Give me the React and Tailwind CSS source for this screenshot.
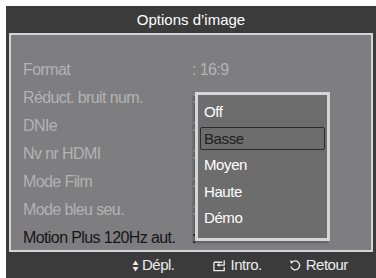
import React from "react";

const ROWS = [
  { label: "Format", value: ": 16:9" },
  { label: "Réduct. bruit num.", value: ":" },
  { label: "DNIe", value: ":" },
  { label: "Nv nr HDMI", value: ":" },
  { label: "Mode Film", value: ":" },
  { label: "Mode bleu seu.", value: ":" },
  { label: "Motion Plus 120Hz aut.", value: ":", active: true },
];

const OPTIONS = ["Off", "Basse", "Moyen", "Haute", "Démo"];

function MoveIcon() {
  return (
    <svg width="7" height="12" viewBox="0 0 7 12" className="mr-[3px]">
      <path d="M3.5 0.5 L6.5 5 L0.5 5 Z" fill="#e8e8e8" />
      <path d="M3.5 11.5 L6.5 7 L0.5 7 Z" fill="#e8e8e8" />
    </svg>
  );
}

function EnterIcon() {
  return (
    <svg width="14" height="13" viewBox="0 0 15 13" className="mr-[4px]">
      <path d="M1 3 H10 M1 3 V12 H12 V8" stroke="#e8e8e8" strokeWidth="1.4" fill="none" />
      <path d="M12 1 V6 H5" stroke="#e8e8e8" strokeWidth="1.4" fill="none" />
      <path d="M4 6 L7 3.8 L7 8.2 Z" fill="#e8e8e8" />
    </svg>
  );
}

function ReturnIcon() {
  return (
    <svg width="12" height="13" viewBox="0 0 13 13" className="mr-[5px]">
      <path d="M3.2 3 A4.8 4.8 0 1 1 2 7.5" stroke="#e8e8e8" strokeWidth="1.4" fill="none" />
      <path d="M1 1.2 L5 1.8 L2.4 4.8 Z" fill="#e8e8e8" />
    </svg>
  );
}

export default function App() {
  return (
    <div className="w-[376px] h-[278px] bg-white pl-[6px] pt-[6px]" style={{ fontFamily: '"Liberation Sans", Arial, sans-serif' }}>
      <div className="w-[370px] h-[272px] bg-[#3b3b3b] flex flex-col px-[3px]">
        <div className="h-[27px] flex items-center justify-center text-[15px] text-white pt-[1px]">
          Options d’image
        </div>
        <div className="relative h-[219px] border-2 border-[#d4d4d4] bg-[#7e7e80] pt-[21px]">
          {ROWS.map((r) => (
            <div key={r.label} className="h-[28px] flex items-center text-[16px] tracking-[-0.6px]">
              <span className={`w-[181px] pl-[12px] ${r.active ? "text-[#161616]" : "text-[#b3b3b3]"}`}>{r.label}</span>
              <span className={r.active ? "text-[#161616]" : "text-[#b3b3b3]"}>{r.value}</span>
            </div>
          ))}

          <div className="absolute left-[184px] top-[57px] w-[135px] h-[149px] border-[3px] border-[#d6d6d6] bg-[#6d6d6d] pt-[4px] px-[2px] shadow-[-2px_2px_2px_rgba(0,0,0,0.25)]">
            {OPTIONS.map((o) => (
              <div key={o} className="h-[26.5px] flex items-center text-[15px] tracking-[-0.4px]">
                {o === "Basse" ? (
                  <div className="w-full h-[23px] flex items-center border-[1.5px] border-[#2a2a2a] rounded-[2px] pl-[3px] text-[#1e1e1e]">
                    {o}
                  </div>
                ) : (
                  <span className="pl-[4px] text-white">{o}</span>
                )}
              </div>
            ))}
          </div>
        </div>
        <div className="flex-1 flex items-center text-[15px] tracking-[-0.5px] text-[#ececec] pt-[1px]">
          <div className="flex items-center ml-[123px]">
            <MoveIcon />
            <span>Dépl.</span>
          </div>
          <div className="flex items-center ml-[38px]">
            <EnterIcon />
            <span>Intro.</span>
          </div>
          <div className="flex items-center ml-[27px]">
            <ReturnIcon />
            <span>Retour</span>
          </div>
        </div>
      </div>
    </div>
  );
}
